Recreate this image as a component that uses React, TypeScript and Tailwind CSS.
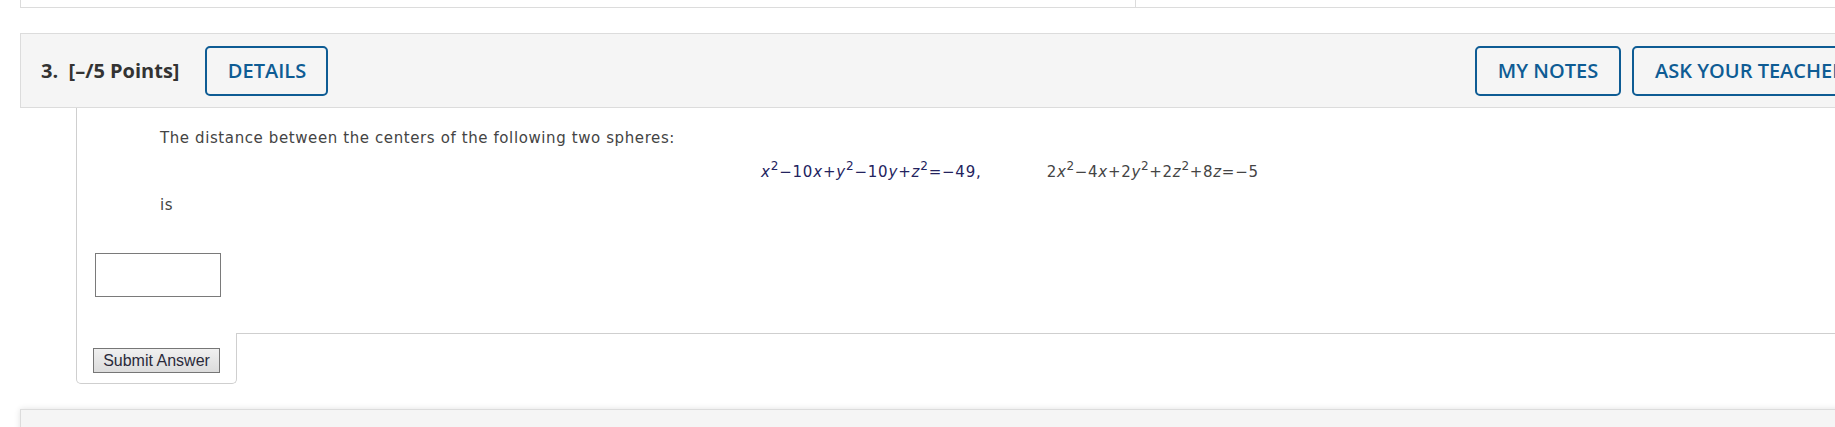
import React from "react";

const blue = "text-[#0e5c94]";

function Eq1() {
  return (
    <span className="text-[#23235e] tracking-[0.8px]">
      <i>x</i><sup className="text-[12px] top-[-7px]">2</sup>−10<i>x</i>+<i>y</i><sup className="text-[12px] top-[-7px]">2</sup>−10<i>y</i>+<i>z</i><sup className="text-[12px] top-[-7px]">2</sup>=−49,
    </span>
  );
}

function Eq2() {
  return (
    <span className="text-[#444] tracking-[0.7px]">
      2<i>x</i><sup className="text-[12px] top-[-7px]">2</sup>−4<i>x</i>+2<i>y</i><sup className="text-[12px] top-[-7px]">2</sup>+2<i>z</i><sup className="text-[12px] top-[-7px]">2</sup>+8<i>z</i>=−5
    </span>
  );
}

export default function App() {
  return (
    <div className="w-[1835px] h-[427px] overflow-hidden bg-white">
      <div className="pl-[20px] w-[1950px]">
        {/* previous panel bottom */}
        <div className="h-[8px] w-[1867px] border-l border-b border-[#dcdcdc] flex">
          <div className="w-[1115px] border-r border-[#dcdcdc]" />
        </div>

        {/* header */}
        <div
          className="mt-[25px] h-[75px] w-[1867px] bg-[#f5f5f5] border border-[#dcdcdc] flex items-center pl-[20px] pr-[18px]"
          style={{ fontFamily: '"Open Sans", sans-serif' }}
        >
          <div className="text-[20px] font-bold text-[#333] whitespace-pre">3.  [–/5 Points]</div>
          <button
            className={`ml-[26px] h-[50px] w-[123px] border-2 border-[#0e5c94] rounded-[5px] text-[20px] font-semibold ${blue} bg-transparent`}
          >
            DETAILS
          </button>
          <div className="ml-auto flex gap-[11px]">
            <button
              className={`h-[50px] w-[146px] border-2 border-[#0e5c94] rounded-[5px] text-[20px] font-semibold ${blue}`}
            >
              MY NOTES
            </button>
            <button
              className={`h-[50px] w-[236px] border-2 border-[#0e5c94] rounded-[5px] text-[20px] font-semibold ${blue} whitespace-nowrap`}
            >
              ASK YOUR TEACHER
            </button>
          </div>
        </div>

        {/* content */}
        <div className="ml-[56px] w-[1811px]" style={{ fontFamily: '"DejaVu Sans", Verdana, sans-serif' }}>
          <div className="border-l border-[#cfcfcf] pt-[20px] pb-[36px] text-[15px] leading-[20px] text-[#444] tracking-[0.6px]">
            <div className="pl-[83px] h-[20px]">The distance between the centers of the following two spheres:</div>
            <div className="mt-[14px] h-[20px] pl-[684px] flex whitespace-nowrap">
              <Eq1 />
              <span className="ml-[65px]">
                <Eq2 />
              </span>
            </div>
            <div className="mt-[13px] pl-[83px] h-[20px]">is</div>
            <div className="mt-[38px] pl-[18px]">
              <div className="w-[126px] h-[44px] border border-[#7a7a7a] bg-white" />
            </div>
          </div>
          <div className="flex">
            <div className="w-[161px] border-l border-r border-b border-[#cfcfcf] rounded-b-[5px] pl-[16px] pt-[15px] pb-[10px]">
              <button
                className="h-[25px] w-[127px] border border-[#767676] bg-gradient-to-b from-[#f0f0f0] to-[#dcdcdc] text-[16px] leading-[20px] text-[#2a2a3a]"
                style={{ fontFamily: '"Liberation Sans", Arial, sans-serif' }}
              >
                Submit Answer
              </button>
            </div>
            <div className="flex-1 border-t border-[#cfcfcf]" />
          </div>
        </div>

        {/* next panel */}
        <div className="mt-[25px] h-[60px] w-[1867px] bg-[#f5f5f5] border border-[#dcdcdc] shadow-[0_0_6px_rgba(0,0,0,0.12)]" />
      </div>
    </div>
  );
}
